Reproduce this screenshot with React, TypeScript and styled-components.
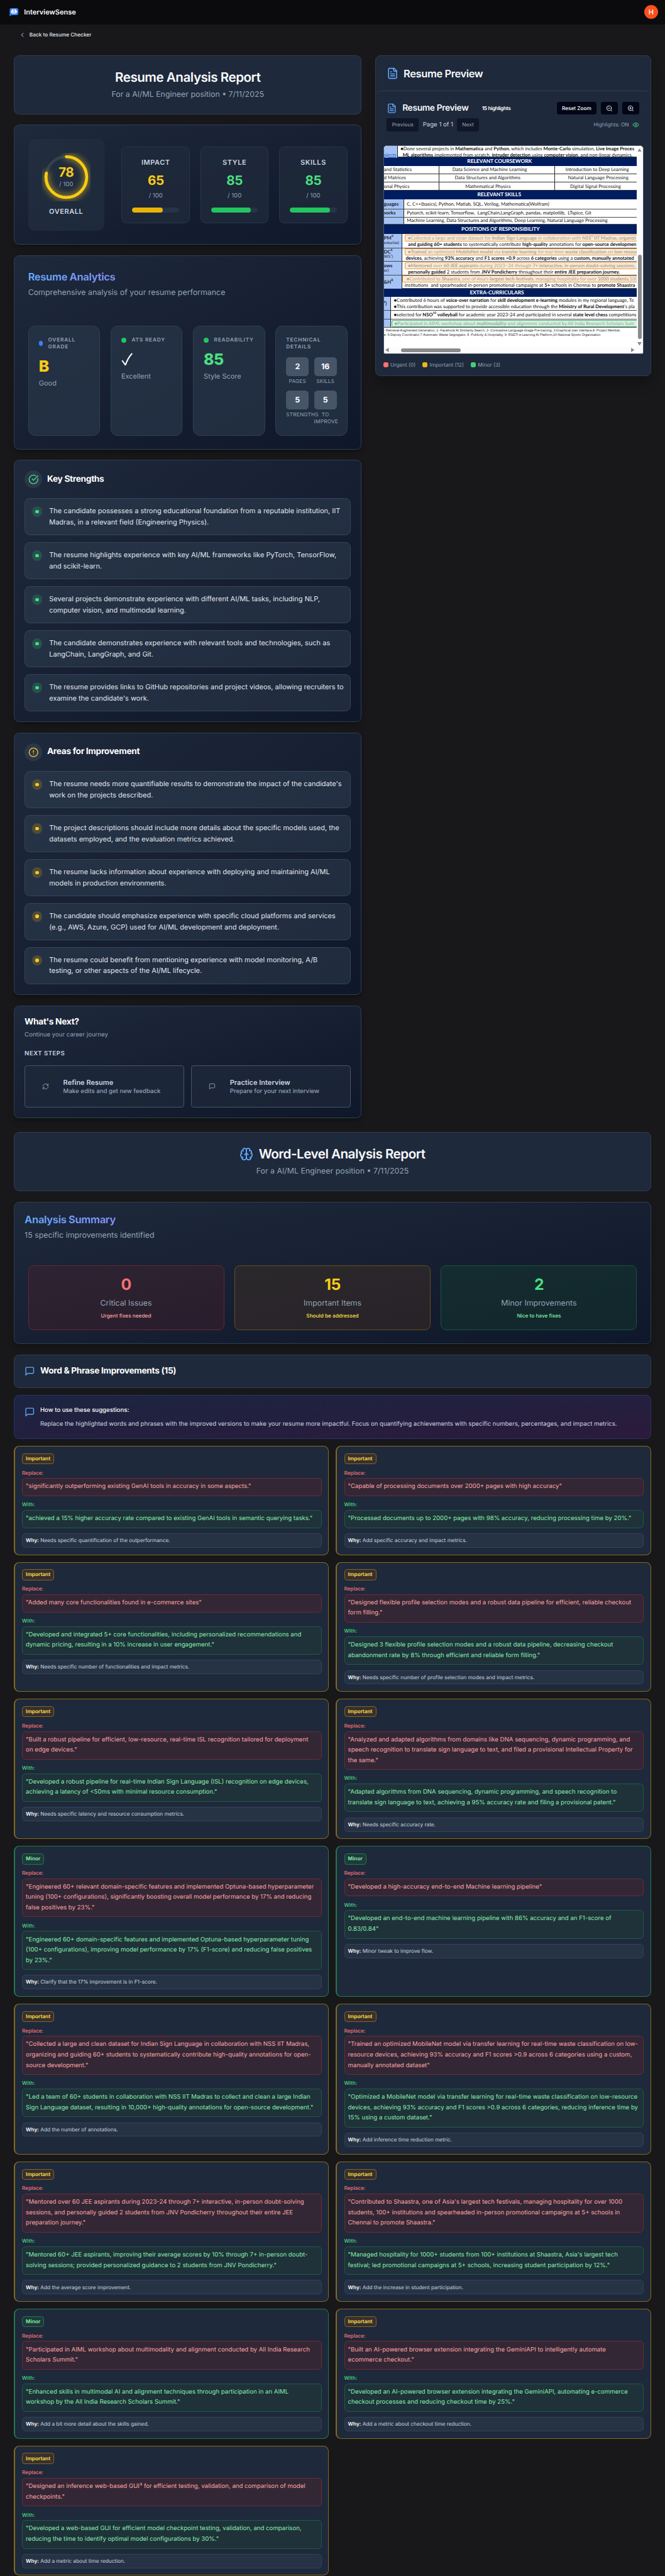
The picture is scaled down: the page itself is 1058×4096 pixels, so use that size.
import React from 'react';
import styled, { createGlobalStyle, css } from 'styled-components';
import { ChevronLeft, CircleAlert, CircleCheckBig, Eye, RefreshCw, ZoomIn, ZoomOut } from 'lucide-react';

/* Layout is authored for a 1536px wide viewport and scaled down as a whole. */
const SCALE = 1058 / 1536;

/* Hairline borders always take one device pixel; paddings give the excess back. */
const inset = (n: number) => `${n - 0.65}px`;

const c = {
  page: '#18181a',
  slate800: '#1e293b',
  slate900: '#0f172a',
  line: '#2f3e53',
  text: '#cbd5e1',
  muted: '#94a3b8',
  blue: '#60a5fa',
  yellow: '#facc15',
  green: '#4ade80',
  red: '#f87171',
};

const GlobalStyle = createGlobalStyle`
  *, *::before, *::after { box-sizing: border-box; }
  html, body { margin: 0; background: ${c.page}; }
  body {
    font-family: Inter, "Liberation Sans", sans-serif;
    text-rendering: geometricPrecision;
    overflow-x: hidden;
  }
  h1, h2, h3, p { margin: 0; }
  button { text-rendering: inherit; }
  svg { display: block; flex-shrink: 0; }
`;

const Page = styled.div`
  zoom: ${SCALE};
  width: 1536px;
  color: #fff;
`;

const TopBar = styled.header`
  display: flex;
  align-items: center;
  justify-content: space-between;
  height: 56px;
  padding: 0 16px 0 22px;
  background: #0b0b0d;
`;

const Brand = styled.div`
  display: flex;
  align-items: center;
  gap: 12.5px;
  font-size: 16px;
  font-weight: 600;
  color: #f8fafc;
`;

const Avatar = styled.div`
  display: grid;
  place-items: center;
  width: 32px;
  height: 32px;
  border-radius: 50%;
  background: #f9501e;
  font-size: 16px;
  font-weight: 500;
`;

const BackLink = styled.a`
  display: flex;
  align-items: center;
  gap: 8px;
  height: 48px;
  padding-left: 44px;
  font-size: 12px;
  font-weight: 500;
  color: #e2e8f0;
`;

const Main = styled.main`
  display: flex;
  flex-direction: column;
  padding: 24.2px 32px 0;
`;

const Columns = styled.div`
  display: grid;
  grid-template-columns: 803.4px 636.6px;
  gap: 32px;
  align-items: start;
`;

const Stack = styled.div`
  display: flex;
  flex-direction: column;
  gap: 24px;
`;

const cardBase = css`
  border: 1px solid ${c.line};
  border-radius: 12px;
`;

const SolidCard = styled.section`
  ${cardBase}
  background: ${c.slate800};
`;

const GradientCard = styled.section<{ $h: number }>`
  ${cardBase}
  height: ${p => p.$h}px;
  background: linear-gradient(to bottom right, ${c.slate800}, ${c.slate900});
  box-shadow: 0 10px 15px -3px rgba(0, 0, 0, 0.22), 0 4px 6px -4px rgba(0, 0, 0, 0.2);
`;

const HeroCard = styled(SolidCard)`
  display: flex;
  flex-direction: column;
  align-items: center;
  gap: 6px;
  height: 135.6px;
  padding: ${inset(32)};
`;

const HeroTitle = styled.h1`
  display: flex;
  align-items: center;
  gap: 12px;
  font-size: 30px;
  line-height: 36px;
  font-weight: 600;
  letter-spacing: -0.025em;
  color: #f8fafc;
`;

const Lead = styled.p`
  font-size: 18px;
  line-height: 28px;
  color: ${c.muted};
`;

const GradientTitle = styled.h2`
  align-self: flex-start;
  font-size: 24px;
  line-height: 32px;
  font-weight: 700;
  letter-spacing: -0.025em;
  background: linear-gradient(to right, ${c.blue}, #818cf8);
  -webkit-background-clip: text;
  background-clip: text;
  color: transparent;
`;

/* ---------- Scores ---------- */

const ScoreCard = styled(GradientCard)`
  display: flex;
  align-items: center;
  gap: 40px;
  padding: ${inset(32)};
`;

const OverallBox = styled.div`
  display: flex;
  flex-direction: column;
  align-items: center;
  gap: 12px;
  width: 176px;
  height: 212px;
  padding: 32px;
  border-radius: 16px;
  background: linear-gradient(to bottom right, #222d3e, #1d2a3b);
`;

const Ring = styled.div`
  display: grid;
  place-items: center;
  width: 112px;
  height: 112px;
  > * { grid-area: 1 / 1; }
  svg { overflow: hidden; }
  .value { filter: drop-shadow(0 0 7px ${c.yellow}); }
`;

const RingValue = styled.div`
  display: flex;
  flex-direction: column;
  align-items: center;
  color: ${c.muted};
  font-size: 14px;
  line-height: 20px;
`;

const BigScore = styled.div<{ $color: string }>`
  font-size: 30px;
  line-height: 36px;
  font-weight: 700;
  letter-spacing: -0.025em;
  color: ${p => p.$color};
`;

const ScoreLabel = styled.div`
  font-size: 16px;
  line-height: 24px;
  font-weight: 600;
  letter-spacing: 0.05em;
  color: ${c.text};
`;

const ScoreGrid = styled.div`
  display: grid;
  flex: 1;
  grid-template-columns: repeat(3, 1fr);
  gap: 24px;
`;

const ScoreTile = styled.div`
  display: flex;
  flex-direction: column;
  align-items: center;
  height: 177.6px;
  padding: ${inset(24)};
  border: 1px solid #27364a;
  border-radius: 12px;
  background: rgba(30, 41, 59, 0.82);
  ${BigScore} { margin-top: 12px; }
`;

const OutOf = styled.div`
  margin-top: 8px;
  font-size: 14px;
  line-height: 20px;
  color: ${c.muted};
`;

const Track = styled.div`
  width: 100%;
  height: 12px;
  margin-top: 16px;
  border-radius: 6px;
  background: #273447;
  overflow: hidden;
`;

const Fill = styled.div<{ $color: string }>`
  height: 100%;
  border-radius: 6px;
  background: ${p => p.$color};
`;

/* ---------- Analytics ---------- */

const AnalyticsCard = styled(GradientCard)`
  display: flex;
  flex-direction: column;
  padding: ${inset(32)};
  ${Lead} { margin-top: 6px; }
`;

const StatGrid = styled.div`
  display: grid;
  grid-template-columns: repeat(4, 1fr);
  gap: 24px;
  margin-top: 64px;
  height: 252.8px;
`;

const StatBox = styled.div`
  display: flex;
  flex-direction: column;
  padding: ${inset(24)};
  border: 1px solid #303f53;
  border-radius: 16px;
  background: rgba(41, 54, 73, 0.68);
`;

const StatHead = styled.div`
  display: flex;
  align-items: center;
  gap: 12px;
  font-size: 12px;
  line-height: 16px;
  font-weight: 600;
  letter-spacing: 0.1em;
  text-transform: uppercase;
  color: ${c.muted};
`;

const StatDot = styled.span<{ $color: string; $w?: number }>`
  flex: none;
  width: ${p => p.$w ?? 12}px;
  height: 12px;
  border-radius: 6px;
  background: ${p => p.$color};
`;

const StatValue = styled.div<{ $color: string }>`
  display: flex;
  align-items: center;
  height: 40px;
  margin-top: 16px;
  font-size: 36px;
  font-weight: 800;
  letter-spacing: -0.025em;
  color: ${p => p.$color};
`;

const StatNote = styled.div`
  margin-top: 8px;
  font-size: 16px;
  line-height: 24px;
  color: ${c.muted};
`;

const TechGrid = styled.div`
  display: grid;
  grid-template-columns: 52.4px 52.4px;
  gap: 12px;
  margin-top: 16px;
`;

const TechItem = styled.div`
  font-size: 12px;
  line-height: 16px;
  letter-spacing: 0.025em;
  text-align: center;
  text-transform: uppercase;
  color: ${c.muted};
`;

const TechNumber = styled.div`
  height: 44px;
  margin-bottom: 4px;
  border-radius: 8px;
  background: #475569;
  font-size: 18px;
  line-height: 44px;
  font-weight: 700;
  letter-spacing: 0;
  color: #fff;
`;

/* ---------- Strengths / improvements ---------- */

const ListCard = styled(GradientCard)`
  display: flex;
  flex-direction: column;
  gap: 24px;
  padding: ${inset(24)};
`;

const ListHead = styled.div`
  display: flex;
  align-items: center;
  gap: 12px;
`;

const IconDisc = styled.div<{ $color: string }>`
  display: grid;
  place-items: center;
  width: 40px;
  height: 40px;
  border-radius: 50%;
  background: #2b374a;
  color: ${p => p.$color};
`;

const CardTitle = styled.h3`
  font-size: 20px;
  line-height: 28px;
  font-weight: 700;
  letter-spacing: -0.025em;
  color: #fff;
`;

const Items = styled.ul`
  display: flex;
  flex-direction: column;
  gap: 16px;
  margin: 0;
  padding: 0;
  list-style: none;
`;

const Item = styled.li`
  display: flex;
  align-items: flex-start;
  gap: 16px;
  height: 85.6px;
  padding: ${inset(16)};
  border: 1px solid #364559;
  border-radius: 12px;
  background: rgba(51, 65, 85, 0.47);
  font-size: 16px;
  line-height: 26px;
  color: #e2e8f0;
`;

const Bullet = styled.span<{ $color: string; $halo: string }>`
  display: grid;
  flex: none;
  place-items: center;
  width: 24px;
  height: 24px;
  margin-top: 2px;
  border-radius: 50%;
  background: ${p => p.$halo};
  &::after {
    content: '';
    width: 8px;
    height: 8px;
    border-radius: 50%;
    background: ${p => p.$color};
  }
`;

/* ---------- Next steps ---------- */

const NextCard = styled(GradientCard)`
  display: flex;
  flex-direction: column;
  padding: ${inset(24)};
`;

const SmallMuted = styled.p`
  margin-top: 6px;
  font-size: 14px;
  line-height: 20px;
  color: ${c.muted};
`;

const Eyebrow = styled.div`
  margin-top: 24px;
  font-size: 14px;
  line-height: 20px;
  font-weight: 600;
  letter-spacing: 0.05em;
  color: ${c.text};
`;

const StepRow = styled.div`
  display: grid;
  grid-template-columns: 1fr 1fr;
  gap: 16px;
  margin-top: 16px;
`;

const Step = styled.button`
  display: flex;
  align-items: center;
  gap: 33px;
  height: 97.6px;
  padding: 0 0 0 ${inset(39.5)};
  border: 1px solid #475569;
  border-radius: 6px;
  background: rgba(30, 41, 59, 0.7);
  font: 500 14px/20px Inter, sans-serif;
  color: ${c.muted};
  text-align: left;
`;

const StepTitle = styled.div`
  font-size: 16px;
  line-height: 24px;
  font-weight: 600;
  color: ${c.text};
`;

/* ---------- Resume preview ---------- */

const PreviewCard = styled(SolidCard)`
  display: flex;
  flex-direction: column;
  height: 739.6px;
  box-shadow: 0 20px 25px -5px rgba(0, 0, 0, 0.25);
`;

const PreviewTitle = styled.h2<{ $small?: boolean }>`
  display: flex;
  align-items: center;
  gap: 12px;
  font-size: ${p => (p.$small ? 20 : 24)}px;
  font-weight: 600;
  letter-spacing: -0.025em;
  color: #f8fafc;
`;

const PreviewHead = styled.div`
  display: flex;
  align-items: center;
  height: 80px;
  padding-left: ${inset(24)};
`;

const PreviewInner = styled.div`
  display: flex;
  flex: 1;
  flex-direction: column;
  border-top: 1px solid ${c.line};
  border-radius: 12px;
  padding: 23.5px 16.4px 0;
`;

const ToolRow = styled.div`
  display: flex;
  align-items: center;
  height: 30.4px;
  margin: 0 9px 7.8px 8.2px;
`;

const HighlightCount = styled.span`
  margin-left: 31px;
  font-size: 12px;
  font-weight: 600;
  letter-spacing: -0.5px;
`;

const Spacer = styled.span`
  flex: 1;
`;

const ToolButton = styled.button<{ $w: number; $off?: boolean }>`
  display: grid;
  place-items: center;
  width: ${p => p.$w}px;
  height: 30.4px;
  padding: 0;
  border: 0;
  border-radius: 5px;
  background: #020617;
  font: 500 12px Inter, sans-serif;
  color: #f8fafc;
  opacity: ${p => (p.$off ? 0.5 : 1)};
  & + & { margin-left: 9.6px; }
`;

const PageLabel = styled.span`
  width: 88.2px;
  text-align: center;
  font-size: 14px;
  color: ${c.text};
`;

const HighlightState = styled.span`
  display: flex;
  align-items: center;
  gap: 8.5px;
  font-size: 12px;
  color: ${c.muted};
  svg { color: ${c.green}; }
`;

const Viewer = styled.div`
  display: grid;
  grid-template-columns: 1fr 15px;
  grid-template-rows: 1fr 15px;
  width: 601.5px;
  height: 481.5px;
  margin-top: 25px;
  border: 2px solid #475569;
  border-radius: 8px 8px 4px 4px;
  background: #fcfcfc;
  overflow: hidden;
`;

const Paper = styled.div`
  overflow: hidden;
  background: #fff;
  color: #1c1c1c;
  font-family: Lato, "Open Sans", sans-serif;
  font-size: 11.1px;
  line-height: 13.5px;
  white-space: pre;
`;

const ScrollV = styled.div`
  display: flex;
  flex-direction: column;
  align-items: center;
  padding: 5px 0 3px;
`;

const ScrollH = styled.div`
  display: flex;
  align-items: center;
  padding: 0 5px 0 4px;
`;

const Thumb = styled.div<{ $w: number; $h: number; $before: number }>`
  width: ${p => p.$w}px;
  height: ${p => p.$h}px;
  margin: ${p => (p.$h > p.$w ? `${p.$before}px 0 auto` : `0 auto 0 ${p.$before}px`)};
  border-radius: 5px;
  background: #8b8b8b;
`;

const Band = styled.div<{ $h: number; $x: number }>`
  display: flex;
  align-items: center;
  height: ${p => p.$h}px;
  background: #001d5f;
  color: #fff;
  font-size: 12.1px;
  font-weight: 700;
  padding-left: ${p => p.$x}px;
`;

const DocRow = styled.div<{ $h: number; $left: number }>`
  display: grid;
  grid-template-columns: ${p => p.$left}px 1fr;
  height: ${p => p.$h}px;
  border-bottom: 1px solid #4a4a4a;
`;

const Side = styled.div<{ $link?: boolean }>`
  display: flex;
  flex-direction: column;
  justify-content: center;
  border-right: 1px solid #222;
  background: #a4c2f4;
  font-weight: 700;
  small { font-size: 9.5px; font-weight: 400; line-height: 13px; }
  sup { font-size: 7.5px; line-height: 0; }
  ${p => p.$link && css`
    justify-content: flex-end;
    font-weight: 400;
    text-decoration: underline;
    color: #1a56c4;
  `}
`;

const Lines = styled.div`
  display: flex;
  flex-direction: column;
  justify-content: center;
  min-width: 0;
`;

const Line = styled.div<{ $x: number; $mark?: 'important' | 'minor' }>`
  padding-left: ${p => p.$x}px;
  color: #111;
  sup { font-size: 7px; line-height: 0; }
  ${p => p.$mark && css`
    height: 16px;
    margin-left: ${p.$x - 6}px;
    padding-left: 5px;
    border: 1px solid ${p.$mark === 'minor' ? '#3fae6e' : '#e39a45'};
    border-right: 0;
    border-radius: 3px 0 0 3px;
    background: ${p.$mark === 'minor' ? '#d8f0e2' : '#f9ead8'};
    color: ${p.$mark === 'minor' ? '#93a89c' : '#b3a48f'};
  `}
`;

const CourseRow = styled.div<{ $h: number }>`
  display: grid;
  grid-template-columns: 127.3px 267px 1fr;
  align-items: stretch;
  height: ${p => p.$h}px;
  border-bottom: 1px solid #333;
`;

const Course = styled.div<{ $x: number }>`
  display: flex;
  align-items: center;
  padding-left: ${p => p.$x}px;
  & + & { border-left: 1px solid #222; }
`;

const Footnote = styled.div`
  padding: 3px 0 0;
  font: 7.7px/10px "Liberation Sans", Arial, sans-serif;
`;

const Legend = styled.div`
  display: flex;
  align-items: center;
  gap: 16px;
  height: 16px;
  margin-top: 16.5px;
  font-size: 12px;
  color: ${c.muted};
`;

const LegendItem = styled.span<{ $color: string }>`
  display: flex;
  align-items: center;
  gap: 4.5px;
  &::before {
    content: '';
    width: 12px;
    height: 12px;
    border-radius: 4px;
    background: ${p => p.$color};
  }
`;

/* ---------- Word level report ---------- */

const WordSection = styled.div`
  display: flex;
  flex-direction: column;
  margin-top: 32px;
`;

const SummaryCard = styled(GradientCard)`
  display: flex;
  flex-direction: column;
  margin-top: 24.4px;
  padding: ${inset(24)};
  ${Lead} { margin-top: 6px; }
`;

const SummaryGrid = styled.div`
  display: grid;
  grid-template-columns: repeat(3, 1fr);
  gap: 24px;
  margin: 56px 8px 0;
`;

type Tone = 'red' | 'yellow' | 'green';

const tones: Record<Tone, { bg: string; line: string; value: string; note: string }> = {
  red: { bg: 'rgba(127, 29, 29, 0.2)', line: '#6b2532', value: c.red, note: '#fca5a5' },
  yellow: { bg: 'rgba(113, 63, 18, 0.22)', line: '#66501d', value: c.yellow, note: '#fde047' },
  green: { bg: 'rgba(20, 83, 45, 0.25)', line: '#19563d', value: c.green, note: '#86efac' },
};

const SummaryBox = styled.div<{ $tone: Tone }>`
  display: flex;
  flex-direction: column;
  align-items: center;
  height: 149.6px;
  padding: ${inset(24)};
  border: 1px solid ${p => tones[p.$tone].line};
  border-radius: 12px;
  background: ${p => tones[p.$tone].bg};
`;

const SummaryValue = styled.div<{ $tone: Tone }>`
  font-size: 36px;
  line-height: 40px;
  font-weight: 700;
  letter-spacing: -0.025em;
  color: ${p => tones[p.$tone].value};
  && + ${Lead} { margin-top: 8px; }
`;

const SummaryNote = styled.div<{ $tone: Tone }>`
  margin-top: 8px;
  font-size: 12px;
  line-height: 16px;
  font-weight: 500;
  color: ${p => tones[p.$tone].note};
`;

const SectionBar = styled(SolidCard)`
  display: flex;
  align-items: center;
  gap: 12px;
  height: 77.6px;
  margin-top: 24.4px;
  padding-left: ${inset(24)};
  color: ${c.blue};
`;

const HowTo = styled.section`
  display: flex;
  align-items: flex-start;
  gap: 12px;
  height: 101px;
  margin-top: 16px;
  padding: ${inset(24.5)} ${inset(24)};
  border: 1px solid #28346a;
  border-radius: 12px;
  background: linear-gradient(to bottom right, #1b2541, #2c1a3c);
  color: ${c.blue};
  svg { margin-top: 2px; }
`;

const HowToText = styled.div`
  font-size: 14px;
  line-height: 20px;
  color: ${c.text};
  strong { display: block; margin-bottom: 12px; font-weight: 500; color: #fff; }
`;

const SuggestionGrid = styled.div`
  display: grid;
  grid-template-columns: 728px 728px;
  grid-template-rows: 251.8px 300px 324px 348px 348.2px 324px 300px 299px;
  gap: 16px;
  margin-top: 16.4px;
`;

const Suggestion = styled.article<{ $minor: boolean }>`
  display: flex;
  flex-direction: column;
  align-items: stretch;
  padding: ${inset(16)} ${inset(16)} 0 16px;
  border: 1px solid ${p => (p.$minor ? '#217a4d' : '#856a20')};
  border-left-width: 4px;
  border-radius: 12px;
  background: ${c.slate800};
`;

const Badge = styled.span<{ $minor: boolean }>`
  align-self: flex-start;
  height: 25.6px;
  margin-bottom: 12px;
  padding: ${inset(4)} ${inset(8)};
  border: 1px solid ${p => (p.$minor ? '#20794c' : '#84661f')};
  border-radius: 6px;
  background: ${p => (p.$minor ? '#1e3a3a' : '#392f2e')};
  font-size: 12px;
  line-height: 16px;
  font-weight: 600;
  color: ${p => (p.$minor ? '#86efac' : '#fde047')};
`;

const PhraseLabel = styled.div<{ $kind: 'old' | 'new' }>`
  margin-bottom: 4px;
  font-size: 12px;
  line-height: 16px;
  font-weight: 500;
  color: ${p => (p.$kind === 'old' ? c.red : c.green)};
`;

const Phrase = styled.div<{ $kind: 'old' | 'new' }>`
  margin-bottom: 12px;
  padding: ${inset(8)} 8px ${inset(8)} ${inset(8)};
  border: 1px solid ${p => (p.$kind === 'old' ? '#6e2b38' : '#1d5d46')};
  border-radius: 8px;
  background: ${p => (p.$kind === 'old' ? '#342735' : '#1f3239')};
  font-size: 14px;
  line-height: 24px;
  color: ${p => (p.$kind === 'old' ? '#fca5a5' : '#86efac')};
`;

const Why = styled.div`
  height: 33.2px;
  padding: ${inset(8)};
  border: 1px solid #344358;
  border-radius: 8px;
  background: #263345;
  font-size: 12px;
  line-height: 16px;
  color: ${c.text};
  strong { font-weight: 600; color: #fff; }
`;

/* ---------- Icons ---------- */

type IconProps = { size: number; color?: string };

const iconAttrs = ({ size, color = 'currentColor' }: IconProps) => ({
  width: size,
  height: size,
  viewBox: '0 0 24 24',
  fill: 'none',
  stroke: color,
  strokeWidth: 2,
  strokeLinecap: 'round' as const,
  strokeLinejoin: 'round' as const,
});

const FileTextIcon = (p: IconProps) => (
  <svg {...iconAttrs(p)}>
    <path d="M15 2H6a2 2 0 0 0-2 2v16a2 2 0 0 0 2 2h12a2 2 0 0 0 2-2V7Z" />
    <path d="M14 2v4a2 2 0 0 0 2 2h4" />
    <path d="M10 9H8" />
    <path d="M16 13H8" />
    <path d="M16 17H8" />
  </svg>
);

const MessageIcon = (p: IconProps) => (
  <svg {...iconAttrs(p)}>
    <path d="M21 15a2 2 0 0 1-2 2H7l-4 4V5a2 2 0 0 1 2-2h14a2 2 0 0 1 2 2z" />
  </svg>
);

const BrainIcon = (p: IconProps) => (
  <svg {...iconAttrs(p)}>
    <path d="M12 5a3 3 0 1 0-5.997.125 4 4 0 0 0-2.526 5.77 4 4 0 0 0 .556 6.588A4 4 0 1 0 12 18Z" />
    <path d="M12 5a3 3 0 1 1 5.997.125 4 4 0 0 1 2.526 5.77 4 4 0 0 1-.556 6.588A4 4 0 1 1 12 18Z" />
    <path d="M15 13a4.5 4.5 0 0 1-3-4 4.5 4.5 0 0 1-3 4" />
    <path d="M17.599 6.5a3 3 0 0 0 .399-1.375" />
    <path d="M6.003 5.125A3 3 0 0 0 6.401 6.5" />
    <path d="M3.477 10.896a4 4 0 0 1 .585-.396" />
    <path d="M19.938 10.5a4 4 0 0 1 .585.396" />
    <path d="M6 18a4 4 0 0 1-1.967-.516" />
    <path d="M19.967 17.484A4 4 0 0 1 18 18" />
  </svg>
);

const LogoIcon = () => (
  <svg width="21" height="19" viewBox="0 0 21 19">
    <path d="M4 0h12.5a4 4 0 0 1 4 4v8a4 4 0 0 1-4 4H4.5L.5 19V4A4 4 0 0 1 4 0Z" fill="#3b82f6" />
    <path
      d="M9.6 2.4c-1.5-.6-2.8.1-3.1 1.2-1.5.1-2.5 1.4-2.1 2.8-1.2.8-1.3 2.6-.2 3.4 0 1.4 1.2 2.3 2.5 2 .8 1.4 2.9 1.6 3.6.3ZM11.6 2.4c1.5-.6 2.8.1 3.1 1.2 1.5.1 2.5 1.4 2.1 2.8 1.2.8 1.3 2.6.2 3.4 0 1.4-1.2 2.3-2.5 2-.8 1.4-2.9 1.6-3.6.3Z"
      fill="#fff"
    />
    <path
      d="M6 6.3c1 0 1.8.5 2 1.5M7 10.2c.3-.8.9-1.2 1.7-1.2M15 5.6c-.4.9-1 1.3-2 1.2M13.2 10.3c1.1.1 1.8-.4 2-1.3M10.6 2.5v10"
      fill="none"
      stroke="#3b82f6"
      strokeWidth=".8"
      strokeLinecap="round"
    />
  </svg>
);

const CheckMark = () => (
  <svg width="27" height="30" viewBox="0 0 27 30" fill="none" stroke="#fff" strokeWidth="3" strokeLinecap="round" strokeLinejoin="round">
    <path d="M2.5 18.5 9.5 28C13 18.5 17.5 9.5 24.2 2.2" />
  </svg>
);

const Arrow = ({ points, w, h }: { points: string; w: number; h: number }) => (
  <svg width={w} height={h} viewBox={`0 0 ${w} ${h}`}>
    <polygon points={points} fill="#8b8b8b" />
  </svg>
);

/* ---------- Data ---------- */

const scores = [
  { label: 'IMPACT', value: 65, text: c.yellow, bar: '#eab308' },
  { label: 'STYLE', value: 85, text: c.green, bar: '#22c55e' },
  { label: 'SKILLS', value: 85, text: c.green, bar: '#22c55e' },
];

const strengths = [
  'The candidate possesses a strong educational foundation from a reputable institution, IIT Madras, in a relevant field (Engineering Physics).',
  'The resume highlights experience with key AI/ML frameworks like PyTorch, TensorFlow, and scikit-learn.',
  'Several projects demonstrate experience with different AI/ML tasks, including NLP, computer vision, and multimodal learning.',
  'The candidate demonstrates experience with relevant tools and technologies, such as LangChain, LangGraph, and Git.',
  "The resume provides links to GitHub repositories and project videos, allowing recruiters to examine the candidate's work.",
];

const improvements = [
  "The resume needs more quantifiable results to demonstrate the impact of the candidate's work on the projects described.",
  'The project descriptions should include more details about the specific models used, the datasets employed, and the evaluation metrics achieved.',
  'The resume lacks information about experience with deploying and maintaining AI/ML models in production environments.',
  'The candidate should emphasize experience with specific cloud platforms and services (e.g., AWS, Azure, GCP) used for AI/ML development and deployment.',
  'The resume could benefit from mentioning experience with model monitoring, A/B testing, or other aspects of the AI/ML lifecycle.',
];

const summary: { tone: Tone; value: string; label: string; note: string }[] = [
  { tone: 'red', value: '0', label: 'Critical Issues', note: 'Urgent fixes needed' },
  { tone: 'yellow', value: '15', label: 'Important Items', note: 'Should be addressed' },
  { tone: 'green', value: '2', label: 'Minor Improvements', note: 'Nice to have fixes' },
];

type Entry = { minor?: boolean; from: string; to: string; why: string };

const suggestions: Entry[] = [
  {
    from: 'significantly outperforming existing GenAI tools in accuracy in some aspects.',
    to: 'achieved a 15% higher accuracy rate compared to existing GenAI tools in semantic querying tasks.',
    why: 'Needs specific quantification of the outperformance.',
  },
  {
    from: 'Capable of processing documents over 2000+ pages with high accuracy',
    to: 'Processed documents up to 2000+ pages with 98% accuracy, reducing processing time by 20%.',
    why: 'Add specific accuracy and impact metrics.',
  },
  {
    from: 'Added many core functionalities found in e-commerce sites',
    to: 'Developed and integrated 5+ core functionalities, including personalized recommendations and dynamic pricing, resulting in a 10% increase in user engagement.',
    why: 'Needs specific number of functionalities and impact metrics.',
  },
  {
    from: 'Designed flexible profile selection modes and a robust data pipeline for efficient, reliable checkout form filling.',
    to: 'Designed 3 flexible profile selection modes and a robust data pipeline, decreasing checkout abandonment rate by 8% through efficient and reliable form filling.',
    why: 'Needs specific number of profile selection modes and impact metrics.',
  },
  {
    from: 'Built a robust pipeline for efficient, low-resource, real-time ISL recognition tailored for deployment on\u00a0edge devices.',
    to: 'Developed a robust pipeline for real-time Indian Sign Language (ISL) recognition on edge devices, achieving a latency of <50ms with minimal resource consumption.',
    why: 'Needs specific latency and resource consumption metrics.',
  },
  {
    from: 'Analyzed and adapted algorithms from domains like DNA sequencing, dynamic programming, and speech recognition to translate sign language to text, and filed a provisional Intellectual Property for the same.',
    to: 'Adapted algorithms from DNA sequencing, dynamic programming, and speech recognition to translate sign language to text, achieving a 95% accuracy rate and filing a provisional patent.',
    why: 'Needs specific accuracy rate.',
  },
  {
    minor: true,
    from: 'Engineered 60+ relevant domain-specific features and implemented Optuna-based hyperparameter tuning (100+ configurations), significantly boosting overall model performance by 17% and reducing false positives by 23%.',
    to: 'Engineered 60+ domain-specific features and implemented Optuna-based hyperparameter tuning (100+ configurations), improving model performance by 17% (F1-score) and reducing false positives by 23%.',
    why: 'Clarify that the 17% improvement is in F1-score.',
  },
  {
    minor: true,
    from: 'Developed a high-accuracy end-to-end Machine learning pipeline',
    to: 'Developed an end-to-end machine learning pipeline with 86% accuracy and an F1-score of 0.83/0.84',
    why: 'Minor tweak to improve flow.',
  },
  {
    from: 'Collected a large and clean dataset for Indian Sign Language in collaboration with NSS IIT Madras, organizing and guiding 60+ students to systematically contribute high-quality annotations for open-source development.',
    to: 'Led a team of 60+ students in collaboration with NSS IIT Madras to collect and clean a large Indian Sign Language dataset, resulting in 10,000+ high-quality annotations for open-source development.',
    why: 'Add the number of annotations.',
  },
  {
    from: 'Trained an optimized MobileNet model via transfer learning for real-time waste classification on low-resource devices, achieving 93% accuracy and F1 scores >0.9 across 6 categories using a custom, manually annotated dataset',
    to: 'Optimized a MobileNet model via transfer learning for real-time waste classification on low-resource devices, achieving 93% accuracy and F1 scores >0.9 across 6 categories, reducing inference time by 15% using a custom dataset.',
    why: 'Add inference time reduction metric.',
  },
  {
    from: 'Mentored over 60 JEE aspirants during 2023-24 through 7+ interactive, in-person doubt-solving sessions, and personally guided 2 students from JNV Pondicherry throughout their entire JEE preparation journey.',
    to: 'Mentored 60+ JEE aspirants, improving their average scores by 10% through 7+ in-person doubt-solving sessions; provided personalized guidance to 2 students from JNV Pondicherry.',
    why: 'Add the average score improvement.',
  },
  {
    from: "Contributed to Shaastra, one of Asia's largest tech festivals, managing hospitality for over 1000 students, 100+ institutions and spearheaded in-person promotional campaigns at 5+ schools in Chennai to promote Shaastra.",
    to: "Managed hospitality for 1000+ students from 100+ institutions at Shaastra, Asia's largest tech festival; led promotional campaigns at 5+ schools, increasing student participation by 12%.",
    why: 'Add the increase in student participation.',
  },
  {
    minor: true,
    from: 'Participated in AIML workshop about multimodality and alignment conducted by All India Research Scholars Summit.',
    to: 'Enhanced skills in multimodal AI and alignment techniques through participation in an AIML workshop by the All India Research Scholars Summit.',
    why: 'Add a bit more detail about the skills gained.',
  },
  {
    from: 'Built an AI-powered browser extension integrating the GeminiAPI to intelligently automate ecommerce checkout.',
    to: 'Developed an AI-powered browser extension integrating the GeminiAPI, automating e-commerce checkout processes and reducing checkout time by 25%.',
    why: 'Add a metric about checkout time reduction.',
  },
  {
    from: 'Designed an inference web-based GUI³ for efficient testing, validation, and comparison of model checkpoints.',
    to: 'Developed a web-based GUI for efficient model checkpoint testing, validation, and comparison, reducing the time to identify optimal model configurations by 30%.',
    why: 'Add a metric about time reduction.',
  },
];

/* ---------- Sections ---------- */

const CIRC = 2 * Math.PI * 42;

const OverallRing = ({ value }: { value: number }) => (
  <Ring>
    <svg width="112" height="112" viewBox="0 0 100 100">
      <circle cx="50" cy="50" r="42" fill="none" stroke="#33404f" strokeWidth="6" />
      <circle
        className="value"
        cx="50"
        cy="50"
        r="42"
        fill="none"
        stroke={c.yellow}
        strokeWidth="6"
        strokeLinecap="round"
        strokeDasharray={`${(CIRC * value) / 100} ${CIRC}`}
        transform="rotate(-90 50 50)"
      />
    </svg>
    <RingValue>
      <BigScore $color={c.yellow}>{value}</BigScore>/ 100
    </RingValue>
  </Ring>
);

const Bullets = ({ items, color, halo }: { items: string[]; color: string; halo: string }) => (
  <Items>
    {items.map(t => (
      <Item key={t}>
        <Bullet $color={color} $halo={halo} />
        <span>{t}</span>
      </Item>
    ))}
  </Items>
);

const ResumePaper = () => (
  <Paper>
    <DocRow $h={25.2} $left={32}>
      <Side $link>ojects</Side>
      <Lines>
        <Line $x={6.5}>●Done several projects in <b>Mathematica</b> and <b>Python</b>, which includes <b>Monte-Carlo</b> simulation, <b>Live Image Proces</b></Line>
        <Line $x={11.5}><b>ML algorithms</b> implemented from scratch, <b>intruder detection</b> using <b>computer vision</b>, and non-linear dynamics.</Line>
      </Lines>
    </DocRow>
    <Band $h={20.3} $x={192.5}>RELEVANT COURSEWORK</Band>
    <CourseRow $h={19}>
      <Course $x={0}>and Statistics</Course>
      <Course $x={29.5}>Data Science and Machine Learning</Course>
      <Course $x={24}>Introduction to Deep Learning</Course>
    </CourseRow>
    <CourseRow $h={19.4}>
      <Course $x={-1}>d Matrices</Course>
      <Course $x={35}>Data Structures and Algorithms</Course>
      <Course $x={29.5}>Natural Language Processing</Course>
    </CourseRow>
    <CourseRow $h={19}>
      <Course $x={0}>onal Physics</Course>
      <Course $x={59.5}>Mathematical Physics</Course>
      <Course $x={34.5}>Digital Signal Processing</Course>
    </CourseRow>
    <Band $h={20} $x={216}>RELEVANT SKILLS</Band>
    <DocRow $h={23.5} $left={47.5}>
      <Side>guages</Side>
      <Lines><Line $x={5.5}>C, C++(basics), Python, Matlab, SQL, Verilog, Mathematica(Wolfram)</Line></Lines>
    </DocRow>
    <DocRow $h={18} $left={47.5}>
      <Side>vorks</Side>
      <Lines><Line $x={5.5}>Pytorch, scikit-learn, Tensorflow,  LangChain,LangGraph, pandas, matplotlib,  LTspice, Git</Line></Lines>
    </DocRow>
    <DocRow $h={16.5} $left={47.5}>
      <Side />
      <Lines><Line $x={5.5}>Machine Learning, Data Structures and Algorithms, Deep Learning, Natural Language Processing</Line></Lines>
    </DocRow>
    <Band $h={22.3} $x={179}>POSITIONS OF RESPONSIBILITY</Band>
    <DocRow $h={33} $left={42}>
      <Side><span>PM<sup>4</sup></span><small>esturize)</small></Side>
      <Lines>
        <Line $x={13} $mark="important">●Collected a large and clean dataset for <b>Indian Sign Language</b> in collaboration with <b>NSS<sup>5</sup> IIT Madras, organizi</b></Line>
        <Line $x={14}><b>and guiding 60+ students</b> to systematically contribute <b>high-quality</b> annotations for <b>open-source developmen</b></Line>
      </Lines>
    </DocRow>
    <DocRow $h={31} $left={42}>
      <Side><span>DC<sup>6</sup></span><small>WS⁷)</small></Side>
      <Lines>
        <Line $x={13} $mark="important">●<b>Trained</b> an optimized <b>MobileNet model</b> via <b>transfer learning</b> for real-time <b>waste classification</b> on <b>low-resour</b></Line>
        <Line $x={8.5}><b>devices</b>, achieving <b>93% accuracy</b> and <b>F1 scores {'>'}0.9</b> across <b>6 categories</b> using a <b>custom, manually annotated</b></Line>
      </Lines>
    </DocRow>
    <DocRow $h={32} $left={42}>
      <Side><span>ows</span><small>or)</small></Side>
      <Lines>
        <Line $x={13} $mark="important">●<b>Mentored</b> over <b>60 JEE aspirants</b> during 2023–24 through <b>7+ interactive, in-person doubt-solving sessions</b>, a</Line>
        <Line $x={14}><b>personally guided</b> 2 students from <b>JNV Pondicherry</b> throughout their <b>entire JEE preparation journey.</b></Line>
      </Lines>
    </DocRow>
    <DocRow $h={30} $left={42}>
      <Side><span>&H<sup>8</sup></span></Side>
      <Lines>
        <Line $x={7} $mark="important"> ●Contributed to <b>Shaastra</b>, one of Asia's <b>largest tech festivals</b>, managing hospitality for over <b>1000 students</b>,100</Line>
        <Line $x={6}>institutions  and spearheaded in-person promotional campaigns at <b>5+</b> schools in Chennai to <b>promote Shaastra</b></Line>
      </Lines>
    </DocRow>
    <Band $h={19} $x={198.5}>EXTRA-CURRICULARS</Band>
    <DocRow $h={32.5} $left={17}>
      <Side><span>⁹)</span></Side>
      <Lines>
        <Line $x={6}>●Contributed 6 hours of <b>voice-over narration</b> for <b>skill development e-learning</b> modules in my regional language, Te</Line>
        <Line $x={6}>●This contribution was supported to provide accessible education through the <b>Ministry of Rural Development</b>'s pla</Line>
      </Lines>
    </DocRow>
    <DocRow $h={20.2} $left={17}>
      <Side />
      <Lines><Line $x={6}>●selected for <b>NSO<sup>10</sup> volleyball</b> for academic year 2023-24 and participated in several <b>state level chess</b> competitions</Line></Lines>
    </DocRow>
    <DocRow $h={19} $left={17}>
      <Side />
      <Lines><Line $x={7} $mark="minor">●Participated in AIML workshop about <b>multimodality</b> and alignment conducted by All India Research Scholars Sum</Line></Lines>
    </DocRow>
    <Footnote>
      - Retrieval-Augmented Generation, 1- Facebook AI Similarity Search, 2- Contrastive Language-Image Pre-training, 3-Graphical user interface,4- Project Member,{'\n'}e, 6-Deputy Coordinator,7-Automatic Waste Segregator, 8 -Publicity & Hospitality, 9- RSETI e-Learning AI Platform,10-National Sports Organisation
    </Footnote>
  </Paper>
);

const Preview = () => (
  <PreviewCard>
    <PreviewHead>
      <PreviewTitle><FileTextIcon size={28} color={c.blue} />Resume Preview</PreviewTitle>
    </PreviewHead>
    <PreviewInner>
      <ToolRow>
        <PreviewTitle $small><FileTextIcon size={24} color={c.blue} />Resume Preview</PreviewTitle>
        <HighlightCount>15 highlights</HighlightCount>
        <Spacer />
        <ToolButton $w={92.2}>Reset Zoom</ToolButton>
        <ToolButton $w={40}><ZoomOut size={16} /></ToolButton>
        <ToolButton $w={40}><ZoomIn size={16} /></ToolButton>
      </ToolRow>
      <ToolRow>
        <ToolButton $w={74.2} $off>Previous</ToolButton>
        <PageLabel>Page 1 of 1</PageLabel>
        <ToolButton $w={50.4} $off>Next</ToolButton>
        <Spacer />
        <HighlightState>Highlights: ON<Eye size={16} /></HighlightState>
      </ToolRow>
      <Viewer>
        <ResumePaper />
        <ScrollV>
          <Arrow w={10} h={8} points="5,0 10,8 0,8" />
          <Thumb $w={9} $h={195} $before={237} />
          <Arrow w={10} h={8} points="0,0 10,0 5,8" />
        </ScrollV>
        <ScrollH>
          <Arrow w={8} h={10} points="8,0 8,10 0,5" />
          <Thumb $w={138} $h={9} $before={28} />
          <Arrow w={8} h={10} points="0,0 8,5 0,10" />
        </ScrollH>
      </Viewer>
      <Legend>
        <LegendItem $color={c.red}>Urgent (0)</LegendItem>
        <LegendItem $color="#e6b917">Important (12)</LegendItem>
        <LegendItem $color="#46cf76">Minor (3)</LegendItem>
      </Legend>
    </PreviewInner>
  </PreviewCard>
);

const SuggestionCard = ({ minor = false, from, to, why }: Entry) => (
  <Suggestion $minor={minor}>
    <Badge $minor={minor}>{minor ? 'Minor' : 'Important'}</Badge>
    <PhraseLabel $kind="old">Replace:</PhraseLabel>
    <Phrase $kind="old">"{from}"</Phrase>
    <PhraseLabel $kind="new">With:</PhraseLabel>
    <Phrase $kind="new">"{to}"</Phrase>
    <Why><strong>Why:</strong> {why}</Why>
  </Suggestion>
);

export default function App() {
  return (
    <Page>
      <GlobalStyle />
      <TopBar>
        <Brand><LogoIcon />InterviewSense</Brand>
        <Avatar>H</Avatar>
      </TopBar>
      <BackLink><ChevronLeft size={16} />Back to Resume Checker</BackLink>
      <Main>
        <Columns>
          <Stack>
            <HeroCard>
              <HeroTitle>Resume Analysis Report</HeroTitle>
              <Lead>For a AI/ML Engineer position • 7/11/2025</Lead>
            </HeroCard>

            <ScoreCard $h={277.6}>
              <OverallBox>
                <OverallRing value={78} />
                <ScoreLabel>OVERALL</ScoreLabel>
              </OverallBox>
              <ScoreGrid>
                {scores.map(s => (
                  <ScoreTile key={s.label}>
                    <ScoreLabel>{s.label}</ScoreLabel>
                    <BigScore $color={s.text}>{s.value}</BigScore>
                    <OutOf>/ 100</OutOf>
                    <Track><Fill $color={s.bar} style={{ width: `${s.value}%` }} /></Track>
                  </ScoreTile>
                ))}
              </ScoreGrid>
            </ScoreCard>

            <AnalyticsCard $h={448.4}>
              <GradientTitle>Resume Analytics</GradientTitle>
              <Lead>Comprehensive analysis of your resume performance</Lead>
              <StatGrid>
                <StatBox>
                  <StatHead><StatDot $color="#3b82f6" $w={9.5} />Overall Grade</StatHead>
                  <StatValue $color={c.yellow}>B</StatValue>
                  <StatNote>Good</StatNote>
                </StatBox>
                <StatBox>
                  <StatHead><StatDot $color="#22c55e" />ATS Ready</StatHead>
                  <StatValue $color="#fff"><CheckMark /></StatValue>
                  <StatNote>Excellent</StatNote>
                </StatBox>
                <StatBox>
                  <StatHead><StatDot $color="#22c55e" />Readability</StatHead>
                  <StatValue $color={c.green}>85</StatValue>
                  <StatNote>Style Score</StatNote>
                </StatBox>
                <StatBox>
                  <StatHead><span>Technical<br />Details</span></StatHead>
                  <TechGrid>
                    <TechItem><TechNumber>2</TechNumber>Pages</TechItem>
                    <TechItem><TechNumber>16</TechNumber>Skills</TechItem>
                    <TechItem><TechNumber>5</TechNumber>Strengths</TechItem>
                    <TechItem><TechNumber>5</TechNumber>To Improve</TechItem>
                  </TechGrid>
                </StatBox>
              </StatGrid>
            </AnalyticsCard>

            <ListCard $h={605.6}>
              <ListHead>
                <IconDisc $color={c.green}><CircleCheckBig size={24} /></IconDisc>
                <CardTitle>Key Strengths</CardTitle>
              </ListHead>
              <Bullets items={strengths} color={c.green} halo="#27514e" />
            </ListCard>

            <ListCard $h={605.6}>
              <ListHead>
                <IconDisc $color={c.yellow}><CircleAlert size={24} /></IconDisc>
                <CardTitle>Areas for Improvement</CardTitle>
              </ListHead>
              <Bullets items={improvements} color={c.yellow} halo="#4f4c3a" />
            </ListCard>

            <NextCard $h={261}>
              <CardTitle>What's Next?</CardTitle>
              <SmallMuted>Continue your career journey</SmallMuted>
              <Eyebrow>NEXT STEPS</Eyebrow>
              <StepRow>
                <Step>
                  <RefreshCw size={16} />
                  <div><StepTitle>Refine Resume</StepTitle>Make edits and get new feedback</div>
                </Step>
                <Step>
                  <MessageIcon size={16} />
                  <div><StepTitle>Practice Interview</StepTitle>Prepare for your next interview</div>
                </Step>
              </StepRow>
            </NextCard>
          </Stack>

          <Preview />
        </Columns>

        <WordSection>
          <HeroCard>
            <HeroTitle><BrainIcon size={32} color={c.blue} />Word-Level Analysis Report</HeroTitle>
            <Lead>For a AI/ML Engineer position • 7/11/2025</Lead>
          </HeroCard>

          <SummaryCard $h={328.8}>
            <GradientTitle>Analysis Summary</GradientTitle>
            <Lead>15 specific improvements identified</Lead>
            <SummaryGrid>
              {summary.map(s => (
                <SummaryBox key={s.label} $tone={s.tone}>
                  <SummaryValue $tone={s.tone}>{s.value}</SummaryValue>
                  <Lead>{s.label}</Lead>
                  <SummaryNote $tone={s.tone}>{s.note}</SummaryNote>
                </SummaryBox>
              ))}
            </SummaryGrid>
          </SummaryCard>

          <SectionBar>
            <MessageIcon size={24} />
            <CardTitle>Word & Phrase Improvements (15)</CardTitle>
          </SectionBar>

          <HowTo>
            <MessageIcon size={24} />
            <HowToText>
              <strong>How to use these suggestions:</strong>
              Replace the highlighted words and phrases with the improved versions to make your resume more impactful. Focus on quantifying achievements with specific numbers, percentages, and impact metrics.
            </HowToText>
          </HowTo>

          <SuggestionGrid>
            {suggestions.map(s => <SuggestionCard key={s.from} {...s} />)}
          </SuggestionGrid>
        </WordSection>
      </Main>
    </Page>
  );
}
